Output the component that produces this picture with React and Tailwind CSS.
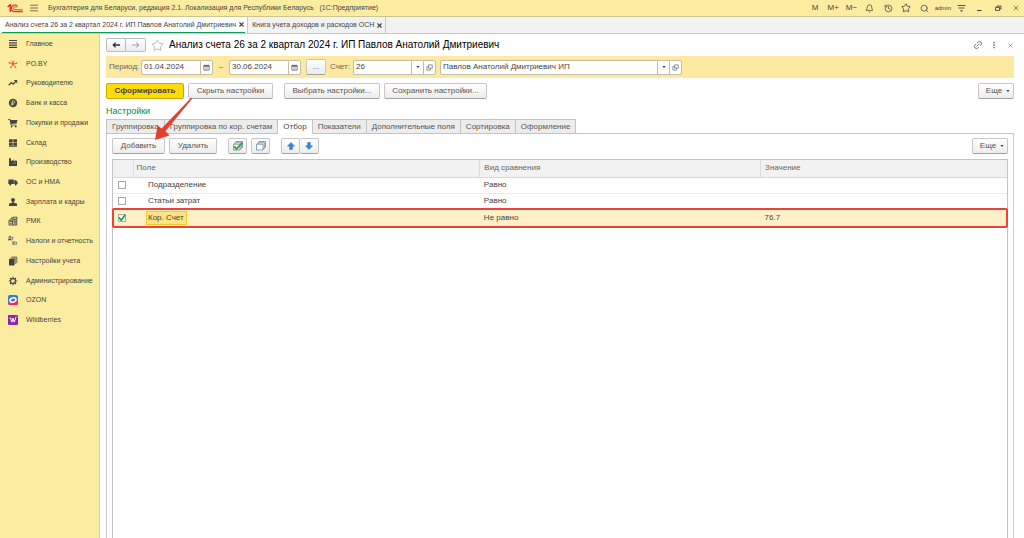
import React, { useState } from 'react';
import { Bell, History, Search, Star, Link2, X } from 'lucide-react';

const menuItems = [
  { id: 'main', label: 'Главное' },
  { id: 'poby', label: 'PO.BY' },
  { id: 'manager', label: 'Руководителю' },
  { id: 'bank', label: 'Банк и касса' },
  { id: 'trade', label: 'Покупки и продажи' },
  { id: 'stock', label: 'Склад' },
  { id: 'factory', label: 'Производство' },
  { id: 'assets', label: 'ОС и НМА' },
  { id: 'salary', label: 'Зарплата и кадры' },
  { id: 'rmk', label: 'РМК' },
  { id: 'taxes', label: 'Налоги и отчетность' },
  { id: 'settings', label: 'Настройки учета' },
  { id: 'admin', label: 'Администрирование' },
  { id: 'ozon', label: 'OZON' },
  { id: 'wb', label: 'Wildberries' },
];

const settingsTabs = [
  'Группировка',
  'Группировка по кор. счетам',
  'Отбор',
  'Показатели',
  'Дополнительные поля',
  'Сортировка',
  'Оформление',
];

const filters = [
  { field: 'Подразделение', comparison: 'Равно', value: '', enabled: false },
  { field: 'Статьи затрат', comparison: 'Равно', value: '', enabled: false },
  { field: 'Кор. Счет', comparison: 'Не равно', value: '76.7', enabled: true },
];

const button =
  'flex h-4 items-center justify-center whitespace-nowrap rounded-xs border border-[#c6c6c6] border-b-[#a3a3a3] bg-linear-to-b from-white to-[#ececec] text-[#555]';

const MenuIcon = ({ id }) => {
  switch (id) {
    case 'main':
      return <path d="M1 1.5h8M1 3.8h8M1 6.1h8M1 8.4h8" stroke="currentColor" strokeWidth="1.2" />;
    case 'poby':
      return (
        <g stroke="#ee5a3a" strokeWidth="0.9" fill="#ee5a3a">
          <path d="M5 5 1.2 3.8M5 5l1.2-3.6M5 5l3.8-.8M5 5l2.6 3.4M5 5 2.8 8.6M5 5 3.6 1.6" />
          <circle cx="5" cy="5" r="1" />
          <circle cx="1.2" cy="3.8" r=".4" />
          <circle cx="8.6" cy="4.2" r=".4" />
          <circle cx="2.8" cy="8.4" r=".4" />
          <circle cx="7.6" cy="8.2" r=".4" />
        </g>
      );
    case 'manager':
      return (
        <g>
          <path d="M.8 7.3 3.3 4.6l2 1.6 2.6-3" fill="none" stroke="currentColor" strokeWidth="1.3" />
          <path d="M5.8 2h3.4v3.4z" fill="currentColor" />
        </g>
      );
    case 'bank':
      return (
        <g>
          <circle cx="5" cy="5" r="4.2" fill="currentColor" />
          <path d="M4.2 7.6V2.8h1.3a1.2 1.2 0 0 1 0 2.5H3.2M3.2 6.4h2.4" fill="none" stroke="#fbed9f" strokeWidth="0.7" />
        </g>
      );
    case 'trade':
      return (
        <g fill="currentColor">
          <path d="M.3 1h1.8l.4 1h7L8.6 5.6l-5.3.5.2.7h5v.8H2.8L1.6 1.9H.3z" />
          <circle cx="3.6" cy="8.6" r=".9" />
          <circle cx="7.8" cy="8.6" r=".9" />
        </g>
      );
    case 'stock':
      return <path d="M1 1.3h3.7v2.9H1zM5.3 1.3H9v2.9H5.3zM1 4.8h3.7v2.9H1zM5.3 4.8H9v2.9H5.3zM1 8.2h8V9H1z" fill="currentColor" />;
    case 'factory':
      return <path d="M1 9V1.3h2v3L5.6 2.6v1.9l2-1.5v1.5L9 3.2V9zM3 6.3h5V5.8z" fill="currentColor" />;
    case 'assets':
      return (
        <g fill="currentColor">
          <path d="M.4 2.5h5.4v4.6H.4zM6.2 3.3h1.9l1.5 1.9v1.9H6.2z" />
          <circle cx="2.3" cy="7.4" r="1" />
          <circle cx="7.7" cy="7.4" r="1" />
        </g>
      );
    case 'salary':
      return (
        <g fill="currentColor">
          <circle cx="5" cy="2.9" r="2" />
          <path d="M4.2 4.5h1.6v1.3l3.2.8v2.4H1V6.6l3.2-.8z" />
        </g>
      );
    case 'rmk':
      return (
        <g fill="none" stroke="currentColor" strokeWidth="0.9">
          <path d="M1 4.2h3.5V9H1zM3 4V2h2M5 1.2h4v2H5zM4.5 4h4.2v5H4.5" />
          <path d="M5.6 5.3h2.2M5.6 6.6h2.2M5.6 7.9h2.2M1.8 5.5h2M1.8 7.2h2" />
        </g>
      );
    case 'taxes':
      return (
        <g fill="currentColor" fontFamily="Liberation Sans, sans-serif" fontSize="4.5" fontWeight="bold">
          <text x="0" y="4.4">Дт</text>
          <text x="4.2" y="8.8">Кт</text>
        </g>
      );
    case 'settings':
      return (
        <g fill="currentColor">
          <path d="M1 3h5.5v6.5H1z" />
          <path d="M2.2 2.2h5V8M3.6 1.1h5.2v6" fill="none" stroke="currentColor" strokeWidth="0.8" />
        </g>
      );
    case 'admin':
      return (
        <g fill="none" stroke="currentColor">
          <circle cx="5" cy="5" r="2.4" strokeWidth="1.2" />
          <path d="M5 .8v1.6M5 7.6v1.6M.8 5h1.6M7.6 5h1.6M2 2l1.1 1.1M6.9 6.9 8 8M8 2 6.9 3.1M3.1 6.9 2 8" strokeWidth="1.2" />
        </g>
      );
    case 'ozon':
      return (
        <g>
          <rect width="10" height="10" rx="2" fill="#2a7de1" />
          <path d="M0 7.6 10 4v4a2 2 0 0 1-2 2H2a2 2 0 0 1-2-2z" fill="#f5265f" />
          <ellipse cx="5" cy="5" rx="3.1" ry="2.1" fill="none" stroke="#fff" strokeWidth="1.5" transform="rotate(-18 5 5)" />
        </g>
      );
    default:
      return (
        <g>
          <rect width="10" height="10" rx="1" fill="#8e24a0" />
          <path d="M1.4 3h1.2l1.2 4.2L5 3l1.2 4.2L8.2 1.6" fill="none" stroke="#fff" strokeWidth="1" />
        </g>
      );
  }
};

const CalendarIcon = () => (
  <svg viewBox="0 0 8 8" className="size-[7px]" fill="none" stroke="#555">
    <path d="M1 1.5h6v5.5H1z" strokeWidth="0.8" />
    <path d="M1 2.2h6" strokeWidth="1.6" />
    <path d="M2.2 4.3h3.6M2.2 5.7h3.6" strokeWidth="0.7" strokeDasharray="0.8 0.6" />
  </svg>
);

const OpenIcon = () => (
  <svg viewBox="0 0 8 8" className="size-[7px]" fill="none" stroke="#666" strokeWidth="0.8">
    <path d="M3 1h4.2v3.8H3z" />
    <path d="M3 3H1v4h4V4.8" />
  </svg>
);

const Caret = () => (
  <svg viewBox="0 0 4 4" className="size-1">
    <path d="M.3 1h3.4L2 3z" fill="#444" />
  </svg>
);

const Pages = ({ checked }) => (
  <svg viewBox="0 0 12 12" className="size-3" fill="#fff" stroke="#7b93ad" strokeWidth="0.9">
    <path d="M4 1.5h6.5v5.8H4z" />
    <path d="M2.8 2.8h6.5v5.8H2.8z" />
    <path d="M1.5 4.2H8v5.8H1.5z" />
    {checked && <path d="m2.2 6.4 2.3 2.7L10.4 2.6" fill="none" stroke="#35a336" strokeWidth="1.9" />}
  </svg>
);

const MoveArrow = ({ down }) => (
  <svg viewBox="0 0 8 8" className={down ? 'size-2 rotate-180' : 'size-2'}>
    <path d="M4 .4 7.6 4.2H5.4v3.4H2.6V4.2H.4z" fill="#3484dc" stroke="#2466b4" strokeWidth="0.4" />
  </svg>
);

const FieldButton = ({ label, children }) => (
  <button aria-label={label} className="flex w-3 shrink-0 items-center justify-center border-l border-[#c4bea4]">
    {children}
  </button>
);

const fieldBox = 'flex h-[15px] rounded-xs border border-[#c4bea4] bg-white';
const fieldInput = 'min-w-0 flex-1 px-0.5 text-[#444] outline-none';

const TopBar = () => (
  <header className="flex h-[17px] shrink-0 items-center border-b border-[#cfc68f] bg-[#fbec9f] text-[7px] text-[#444]">
    <svg viewBox="0 0 16 10" className="ml-[7px] h-[10px] w-4" fill="none" stroke="#e0352b">
      <path d="M.6 3.9 3.4 1.9v7.2" strokeWidth="1.6" />
      <path d="M10.6 3.6A3.3 3.3 0 1 0 8 8.6h7.8" strokeWidth="1.1" />
      <path d="M9.4 4.6A1.5 1.5 0 1 0 8 6.8h7.8" strokeWidth="1" />
    </svg>
    <button aria-label="Меню" className="ml-[7px]">
      <svg viewBox="0 0 8 8" className="size-2" stroke="#555" strokeWidth="0.8">
        <path d="M0 1.2h8M0 4h8M0 6.8h8" />
      </svg>
    </button>
    <span className="ml-2.5 flex-1 whitespace-pre">
      Бухгалтерия для Беларуси, редакция 2.1. Локализация для Республики Беларусь   (1С:Предприятие)
    </span>
    <div className="flex w-[217px] items-center justify-between *:flex *:w-4 *:justify-center">
      <button className="text-[8px]">M</button>
      <button className="text-[8px]">M+</button>
      <button className="text-[8px]">M−</button>
      <button aria-label="Уведомления"><Bell className="size-[9px]" /></button>
      <button aria-label="История"><History className="size-[9px]" /></button>
      <button aria-label="Избранное"><Star className="size-[10px]" /></button>
      <button aria-label="Поиск"><Search className="size-[9px]" /></button>
      <button className="text-[6px]">admin</button>
      <button aria-label="Настройки окна">
        <svg viewBox="0 0 9 9" className="size-[9px]" fill="none" stroke="currentColor" strokeWidth="0.9">
          <path d="M.5 1.5h8M1.5 4h6" />
          <path d="M3 6.3h3L4.5 8z" fill="currentColor" stroke="none" />
        </svg>
      </button>
      <button aria-label="Свернуть">
        <svg viewBox="0 0 8 8" className="size-2" stroke="currentColor"><path d="M2 6.5h4.5" /></svg>
      </button>
      <button aria-label="Восстановить">
        <svg viewBox="0 0 8 8" className="size-2" fill="none" stroke="currentColor" strokeWidth="0.9">
          <path d="M1.5 3.4h4v3h-4zM3 3.2V2h4v3H5.7" />
        </svg>
      </button>
      <button aria-label="Закрыть"><X className="size-2" /></button>
    </div>
  </header>
);

const WindowTabs = () => (
  <nav className="flex h-[17px] shrink-0 border-b border-[#c9c9c9] bg-[#f2f2f2] text-[7px] text-[#444]">
    <div className="flex border-r border-[#c9c9c9] bg-white px-0.5">
      <div className="flex items-center border-b border-[#0d9b57] pl-[3px]">
        <a href="#analysis">Анализ счета 26 за 2 квартал 2024 г. ИП Павлов Анатолий Дмитриевич</a>
        <button aria-label="Закрыть вкладку" className="ml-0.5"><X className="size-[7px]" strokeWidth={4} /></button>
      </div>
    </div>
    <div className="flex items-center border-r border-[#c9c9c9] pl-1 pr-0.5">
      <a href="#book">Книга учета доходов и расходов ОСН</a>
      <button aria-label="Закрыть вкладку" className="ml-0.5"><X className="size-[7px]" strokeWidth={4} /></button>
    </div>
  </nav>
);

const Sidebar = () => (
  <aside className="w-[100px] shrink-0 border-r border-[#d9d2a0] bg-[#fbed9f] text-[7px] text-[#444]">
    <ul className="flex h-[296px] flex-col">
      {menuItems.map((item) => (
        <li key={item.id} className="flex flex-1">
          <a href={`#${item.id}`} className="flex items-center gap-2 whitespace-nowrap pl-2">
            <svg viewBox="0 0 10 10" className="size-[10px]">
              <MenuIcon id={item.id} />
            </svg>
            {item.label}
          </a>
        </li>
      ))}
    </ul>
  </aside>
);

const FilterTable = () => {
  const [rows, setRows] = useState(filters);

  const toggle = (index) =>
    setRows(rows.map((row, i) => (i === index ? { ...row, enabled: !row.enabled } : row)));

  return (
    <div className="mt-[5px] flex-1 border border-b-0 border-[#c4c4c4]">
      <table className="w-full table-fixed border-collapse text-left">
        <thead>
          <tr className="h-[17px] border-b border-[#d8d8d8] bg-[#f2f2f2] text-[#666]">
            <th className="w-5 border-r border-[#dcdcdc]" />
            <th className="w-[38.8%] border-r border-[#dcdcdc] px-[3px] font-normal">Поле</th>
            <th className="w-[31.4%] border-r border-[#dcdcdc] px-1 font-normal">Вид сравнения</th>
            <th className="px-1 font-normal">Значение</th>
          </tr>
        </thead>
        <tbody>
          {rows.map((row, index) => {
            const selected = index === rows.length - 1;
            return (
              <tr
                key={row.field}
                className={selected ? 'relative h-[18px] bg-[#fff0c8]' : 'h-4 border-b border-[#ececec]'}
              >
                <td>
                  <label className="ml-[5px] flex size-2 items-center justify-center border border-[#a9a9a9] bg-white">
                    <input
                      type="checkbox"
                      aria-label={row.field}
                      checked={row.enabled}
                      onChange={() => toggle(index)}
                      className="sr-only"
                    />
                    {row.enabled && (
                      <svg viewBox="0 0 8 8" className="size-2 shrink-0" fill="none" stroke="#0a9a50" strokeWidth="1.6">
                        <path d="m1 3.6 2.2 2.6L7.2.8" />
                      </svg>
                    )}
                  </label>
                  {selected && (
                    <span className="pointer-events-none absolute -inset-px rounded-xs border-2 border-[#e8443a]" />
                  )}
                </td>
                <td className="pl-[15px]">
                  {selected ? (
                    <span className="-ml-0.5 inline-block border border-[#f3cb2e] bg-[#fde481] p-px pr-0.5">{row.field}</span>
                  ) : (
                    row.field
                  )}
                </td>
                <td className="px-1">{row.comparison}</td>
                <td className="px-1">{row.value}</td>
              </tr>
            );
          })}
        </tbody>
      </table>
    </div>
  );
};

const App = () => {
  const [activeTab, setActiveTab] = useState('Отбор');

  return (
    <div className="flex min-h-screen flex-col bg-white font-['Liberation_Sans',Arial,sans-serif] text-[8px] leading-[10px] text-[#444]">
      <TopBar />
      <WindowTabs />
      <div className="flex flex-1">
        <Sidebar />
        <main className="flex min-w-0 flex-1 flex-col pl-1.5 pr-2.5 pt-1">
          {/* Title row */}
          <div className="flex h-[14px] items-center">
            <div className="flex">
              <button aria-label="Назад" className="flex h-[14px] w-5 items-center justify-center rounded-l-xs border border-[#bdbdbd] bg-linear-to-b from-white to-[#ececec]">
                <svg viewBox="0 0 8 8" className="size-2" fill="none" stroke="#333" strokeWidth="1.3"><path d="M8 4H1M3.6 1.6 1.2 4l2.4 2.4" /></svg>
              </button>
              <button aria-label="Вперед" className="flex h-[14px] w-5 items-center justify-center rounded-r-xs border border-l-0 border-[#bdbdbd] bg-linear-to-b from-white to-[#ececec]">
                <svg viewBox="0 0 8 8" className="size-2" fill="none" stroke="#aaa" strokeWidth="1.1"><path d="M0 4h7M4.4 1.6 6.8 4 4.4 6.4" /></svg>
              </button>
            </div>
            <button aria-label="В избранное" className="ml-[5px]">
              <Star className="size-[13px] text-[#aaa]" strokeWidth={1.5} />
            </button>
            <h1 className="ml-[5px] flex-1 text-[10px] text-black">
              Анализ счета 26 за 2 квартал 2024 г. ИП Павлов Анатолий Дмитриевич
            </h1>
            <div className="flex items-center text-[#666]">
              <button aria-label="Ссылка"><Link2 className="size-[10px] -rotate-45" /></button>
              <button aria-label="Еще действия" className="ml-[7px] flex w-2 justify-center">
                <svg viewBox="0 0 2 8" className="h-2 w-0.5" fill="currentColor"><path d="M.3.8h1.4v1.4H.3zM.3 3.3h1.4v1.4H.3zM.3 5.8h1.4v1.4H.3z" /></svg>
              </button>
              <button aria-label="Закрыть" className="ml-[9px]"><X className="size-[7px]" /></button>
            </div>
          </div>

          {/* Period and account */}
          <div className="mt-1 flex h-[22px] items-center bg-[#fde9a0] pl-[3px] text-[#666]">
            <label htmlFor="from" className="w-8">Период:</label>
            <div className={`${fieldBox} w-[72px]`}>
              <input id="from" defaultValue="01.04.2024" className={fieldInput} />
              <FieldButton label="Календарь"><CalendarIcon /></FieldButton>
            </div>
            <label htmlFor="to" className="w-4 text-center">–</label>
            <div className={`${fieldBox} w-[72px]`}>
              <input id="to" defaultValue="30.06.2024" className={fieldInput} />
              <FieldButton label="Календарь"><CalendarIcon /></FieldButton>
            </div>
            <button className={`${button} ml-[5px] w-5`}>...</button>
            <label htmlFor="account" className="ml-1 w-[23px]">Счет:</label>
            <div className={`${fieldBox} w-[83px]`}>
              <input id="account" defaultValue="26" className={fieldInput} />
              <FieldButton label="Выбрать"><Caret /></FieldButton>
              <FieldButton label="Открыть"><OpenIcon /></FieldButton>
            </div>
            <div className={`${fieldBox} ml-1 w-[242px]`}>
              <input aria-label="Организация" defaultValue="Павлов Анатолий Дмитриевич ИП" className={fieldInput} />
              <FieldButton label="Выбрать"><Caret /></FieldButton>
              <FieldButton label="Открыть"><OpenIcon /></FieldButton>
            </div>
          </div>

          {/* Commands */}
          <div className="relative mt-[5px] flex">
            <button className="h-4 w-[78px] rounded-xs border border-[#c9aa00] bg-[#fddb0b] font-bold">Сформировать</button>
            <button className={`${button} ml-1 w-[85px]`}>Скрыть настройки</button>
            <button className={`${button} ml-[11px] w-24`}>Выбрать настройки...</button>
            <button className={`${button} ml-1 w-[103px]`}>Сохранить настройки...</button>
            <button className={`${button} ml-auto w-9 gap-1 pl-1`}>Еще <Caret /></button>

            {/* Pointer to the add button */}
            <svg viewBox="0 0 42 44" className="pointer-events-none absolute left-12 top-[14px] z-10 h-11 w-[42px]">
              <path d="M38.2 1.8 11.4 34.2 15.6 38.4 1 43 3.6 28.4 7.6 31.6 37.2.8z" fill="#e5402f" />
            </svg>
          </div>

          <h2 className="mt-[7px] text-[9px] text-[#0b8a4b]">Настройки</h2>

          {/* Settings tabs */}
          <div role="tablist" className="mt-[3px] flex">
            {settingsTabs.map((tab) => (
              <button
                key={tab}
                role="tab"
                aria-selected={tab === activeTab}
                onClick={() => setActiveTab(tab)}
                className={`h-[15px] whitespace-nowrap border border-l-0 px-[5px] first:border-l ${
                  tab === activeTab
                    ? 'border-[#c4c4c4] border-b-white bg-white'
                    : 'border-[#c4c4c4] bg-[#ececec] text-[#555]'
                }`}
              >
                {tab}
              </button>
            ))}
            <div className="flex-1 border-b border-[#c4c4c4]" />
          </div>

          <section className="flex flex-1 flex-col border-x border-[#d0d0d0] px-[5px] pt-1">
            <div className="flex">
              <button className={`${button} w-[53px]`}>Добавить</button>
              <button className={`${button} ml-1 w-12`}>Удалить</button>
              <button aria-label="Установить флажки" className={`${button} ml-[11px] w-[19px]`}><Pages checked /></button>
              <button aria-label="Снять флажки" className={`${button} ml-1 w-[19px]`}><Pages /></button>
              <div className="ml-[11px] flex">
                <button aria-label="Вверх" className={`${button} w-[19px]`}><MoveArrow /></button>
                <button aria-label="Вниз" className={`${button} w-[19px] border-l-0`}><MoveArrow down /></button>
              </div>
              <button className={`${button} ml-auto w-9 gap-1 pl-1`}>Еще <Caret /></button>
            </div>
            <FilterTable />
          </section>
        </main>
      </div>
    </div>
  );
};

export default App;
